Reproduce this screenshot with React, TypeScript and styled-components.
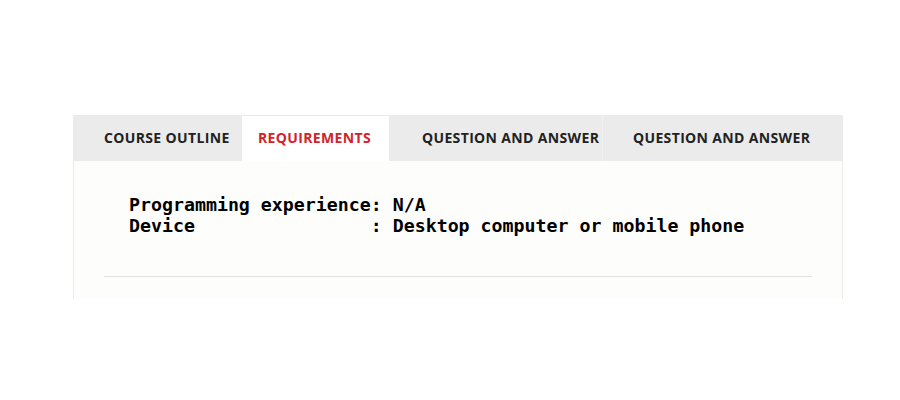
import React from "react";
import styled, { createGlobalStyle } from "styled-components";

const Global = createGlobalStyle`
  html, body { margin: 0; padding: 0; background: #ffffff; }
  body { width: 900px; height: 400px; overflow: hidden; }
`;

const Page = styled.div`
  padding: 115px 57px 0 73px;
`;

const Panel = styled.section`
  width: 770px;
  background: #fdfdfb;
  border-left: 1px solid #ececec;
  border-right: 1px solid #ececec;
  box-sizing: border-box;
`;

const TabBar = styled.nav`
  display: flex;
  height: 46px;
  background: #ebebeb;
  margin: 0 -1px;
`;

const Tab = styled.div<{ $w: number; $pl: number; $active?: boolean; $sep?: boolean }>`
  display: flex;
  align-items: center;
  box-sizing: border-box;
  width: ${(p) => p.$w}px;
  padding-left: ${(p) => p.$pl}px;
  padding-bottom: 2px;
  background: ${(p) => (p.$active ? "#ffffff" : "transparent")};
  border-top: 1px solid ${(p) => (p.$active ? "#e8e8e8" : "transparent")};
  border-left: 1px solid ${(p) => (p.$sep ? "#f1f1f1" : "transparent")};
  font-family: "Open Sans", "Liberation Sans", sans-serif;
  font-weight: 700;
  font-size: 14px;
  letter-spacing: 0.35px;
  text-transform: uppercase;
  white-space: nowrap;
  color: ${(p) => (p.$active ? "#d1232a" : "#222222")};
`;

const Body = styled.div`
  padding: 33px 30px 22px 30px;
`;

const Info = styled.pre`
  margin: 0 0 40px 25px;
  font-family: "DejaVu Sans Mono", monospace;
  font-weight: 700;
  font-size: 18.25px;
  line-height: 21px;
  color: #000;
`;

const Rule = styled.hr`
  margin: 0;
  border: none;
  border-top: 1px solid #e3e3e3;
`;

export default function App() {
  return (
    <>
      <Global />
      <Page>
        <Panel>
          <TabBar>
            <Tab $w={169} $pl={30}>Course Outline</Tab>
            <Tab $w={147} $pl={15} $active>Requirements</Tab>
            <Tab $w={213} $pl={32}>Question and Answer</Tab>
            <Tab $w={241} $pl={30} $sep>Question and Answer</Tab>
          </TabBar>
          <Body>
            <Info>{"Programming experience: N/A\nDevice                : Desktop computer or mobile phone"}</Info>
            <Rule />
          </Body>
        </Panel>
      </Page>
    </>
  );
}
